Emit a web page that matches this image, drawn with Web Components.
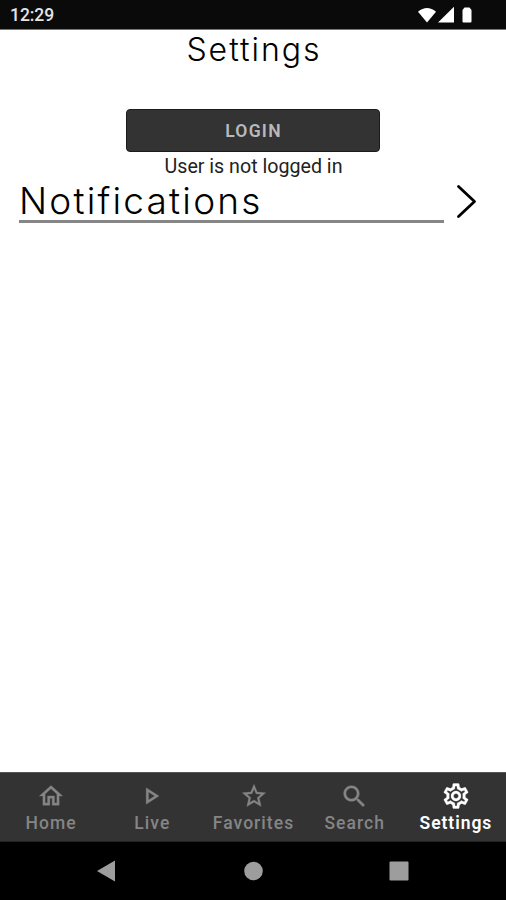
<!DOCTYPE html>
<html lang="en"><head><meta charset="utf-8"><title>Settings</title>
<style>html,body{margin:0;background:#fff}body{width:506px;height:900px;overflow:hidden;font-family:Roboto,sans-serif}</style></head>
<body><settings-app></settings-app>
<script>
const define=(name,html)=>customElements.define(name,class extends HTMLElement{
  constructor(){super();const t=document.createElement('template');t.innerHTML=html;this.attachShadow({mode:'open'}).append(t.content.cloneNode(true));}
});
define('status-bar',`<style>
:host{display:flex;box-sizing:border-box;height:30px;background:#0a0a0a;border-bottom:1px solid #777;padding:1px 32px 0 10px;justify-content:space-between;align-items:center;color:#e4e4e4;font-size:17.5px;font-weight:500}
span{letter-spacing:-.05px}svg{display:block}</style>
<span>12:29</span><svg width="56" height="18" viewBox="0 0 56 18" fill="#fff"><path d="M0 5.7Q9 -1.8 18 5.7L9 16.5Z"/><path d="M20 16.5L36 .8V16.5Z"/><path d="M44.500 4l2-2.500h5l2 2.500v11.500q0 1-1 1h-7q-1 0-1-1Z"/></svg>`);
define('login-button',`<style>:host{display:block}
button{display:block;width:254px;height:43px;padding:0 0 0 1px;border:1px solid #1b1b1b;border-radius:4px;background:#333;color:#b9b9b9;font:600 17.5px Roboto,sans-serif;letter-spacing:1.25px}</style><button><slot></slot></button>`);
define('setting-row',`<style>:host{display:flex;align-items:flex-start;padding-left:19px}
div{box-sizing:border-box;width:425px;height:44px;border-bottom:3px solid #868686;font:300 37px/43px Inter,sans-serif;letter-spacing:2.2px;white-space:nowrap}
svg{margin:4px 0 0 10px}</style><div><slot></slot></div>
<svg width="26" height="36" viewBox="0 0 26 36" fill="none" stroke="#000" stroke-width="2.8" stroke-linecap="round" stroke-linejoin="round"><path d="M4.500 3.500L20.500 18.500L4.500 33.500"/></svg>`);
define('tab-item',`<style>
:host{display:flex;flex:1 1 0;min-width:0;flex-direction:column;align-items:center;padding:8px 0 0 1px;color:#858585;font:500 17.5px/21px Roboto,sans-serif;letter-spacing:1.05px}
:host([active]){color:#fff;letter-spacing:.95px;font-weight:600}
.icon{display:flex;width:30px;height:30px;align-items:center;justify-content:center}.label{margin-top:2px;white-space:nowrap}
::slotted(svg){display:block;fill:currentColor;stroke:currentColor;stroke-width:.25px}</style><div class="icon"><slot name="icon"></slot></div><div class="label"><slot></slot></div>`);
define('tab-bar',`<style>:host{display:flex;box-sizing:border-box;height:70px;background:#333;border-top:1px solid #555;border-bottom:1px solid #222}</style>
<tab-item><svg slot="icon" width="28" height="28" viewBox="0 0 24 24"><path d="M12 5.690l5 4.500V18h-2v-6H9v6H7v-7.810l5-4.500M12 3L2 12h3v8h6v-6h2v6h6v-8h3L12 3z"/></svg>Home</tab-item>
<tab-item><svg slot="icon" width="28" height="28" viewBox="0 0 24 24"><path d="M9 8.640L14.270 12 9 15.360V8.640M7 5v14l11-7L7 5z"/></svg>Live</tab-item>
<tab-item><svg slot="icon" width="28" height="28" viewBox="0 0 24 24"><path d="M22 9.240l-7.190-.620L12 2 9.190 8.630 2 9.240l5.460 4.730L5.820 21 12 17.270 18.180 21l-1.630-7.030L22 9.240zM12 15.400l-3.760 2.270 1-4.280-3.320-2.880 4.380-.380L12 6.100l1.710 4.040 4.380.380-3.320 2.880 1 4.280L12 15.400z"/></svg>Favorites</tab-item>
<tab-item><svg slot="icon" width="29" height="29" viewBox="0 0 24 24"><path d="M15.500 14h-.790l-.280-.270C15.410 12.590 16 11.110 16 9.500 16 5.910 13.090 3 9.500 3S3 5.910 3 9.500 5.910 16 9.500 16c1.610 0 3.090-.590 4.230-1.570l.270.280v.790l5 4.990L20.490 19l-4.990-5zm-6 0C7.010 14 5 11.990 5 9.500S7.010 5 9.500 5 14 7.010 14 9.500 11.990 14 9.500 14z"/></svg>Search</tab-item>
<tab-item active><svg slot="icon" width="30" height="30" viewBox="0 0 24 24"><path d="M19.430 12.980c.04-.32.07-.64.07-.98 0-.34-.03-.66-.07-.98l2.110-1.650c.19-.15.24-.42.12-.64l-2-3.460c-.09-.16-.26-.25-.44-.25-.06 0-.12.010-.17.030l-2.490 1c-.52-.4-1.080-.73-1.690-.98l-.38-2.650C14.460 2.180 14.250 2 14 2h-4c-.25 0-.46.18-.49.42l-.38 2.650c-.61.25-1.170.59-1.690.98l-2.490-1c-.06-.02-.12-.03-.18-.03-.17 0-.34.09-.43.25l-2 3.460c-.13.22-.07.49.12.64l2.110 1.650c-.04.32-.07.65-.07.98 0 .33.03.66.07.98l-2.110 1.650c-.19.15-.24.42-.12.64l2 3.460c.09.16.26.25.44.25.06 0 .12-.01.17-.03l2.490-1c.52.4 1.080.73 1.690.98l.38 2.650c.03.24.24.42.49.42h4c.25 0 .46-.18.49-.42l.38-2.650c.61-.25 1.170-.59 1.690-.98l2.490 1c.06.02.12.03.18.03.17 0 .34-.09.43-.25l2-3.460c.12-.22.07-.49-.12-.64l-2.110-1.650zm-1.980-1.710c.04.31.05.52.05.73 0 .21-.02.43-.05.73l-.14 1.130.89.7 1.080.84-.7 1.210-1.270-.51-1.040-.42-.9.68c-.43.32-.84.56-1.250.73l-1.060.43-.16 1.130-.2 1.350h-1.400l-.19-1.350-.16-1.130-1.060-.43c-.43-.18-.83-.41-1.230-.71l-.91-.7-1.060.43-1.270.51-.7-1.210 1.080-.84.89-.7-.14-1.130c-.03-.31-.05-.54-.05-.74s.02-.43.05-.73l.14-1.130-.89-.7-1.080-.84.7-1.210 1.270.51 1.040.42.9-.68c.43-.32.84-.56 1.250-.73l1.060-.43.16-1.130.2-1.350h1.390l.19 1.350.16 1.130 1.060.43c.43.18.83.41 1.230.71l.91.7 1.060-.43 1.270-.51.7 1.210-1.070.85-.89.7.14 1.130zM12 8c-2.210 0-4 1.790-4 4s1.790 4 4 4 4-1.790 4-4-1.790-4-4-4zm0 6c-1.100 0-2-.9-2-2s.9-2 2-2 2 .9 2 2-.9 2-2 2z"/></svg>Settings</tab-item>`);
define('system-nav',`<style>:host{display:flex;height:58px;background:#000;align-items:center;justify-content:space-between;padding:0 96px}svg{display:block;fill:#9d9d9d}</style>
<svg width="22" height="22"><path d="M1 11L19 .5V21.5Z"/></svg><svg width="20" height="20"><circle cx="10.500" cy="10" r="9.300"/></svg><svg width="22" height="20"><rect x="1.500" y=".5" width="19" height="19" rx="1"/></svg>`);
define('settings-app',`<style>:host{display:flex;flex-direction:column;height:900px;width:506px}
main{flex:1;display:flex;flex-direction:column;align-items:center}
h1{margin:0;height:79px;padding-left:2px;font:300 32px/40px Inter,sans-serif;letter-spacing:2px}
p{margin:3px 0 0;padding-left:1px;font-size:19.65px;line-height:23px;color:#222}
setting-row{align-self:stretch;margin-top:1px}</style>
<status-bar></status-bar><main><h1>Settings</h1><login-button>LOGIN</login-button><p>User is not logged in</p><setting-row>Notifications</setting-row></main><tab-bar></tab-bar><system-nav></system-nav>`);
</script></body></html>
